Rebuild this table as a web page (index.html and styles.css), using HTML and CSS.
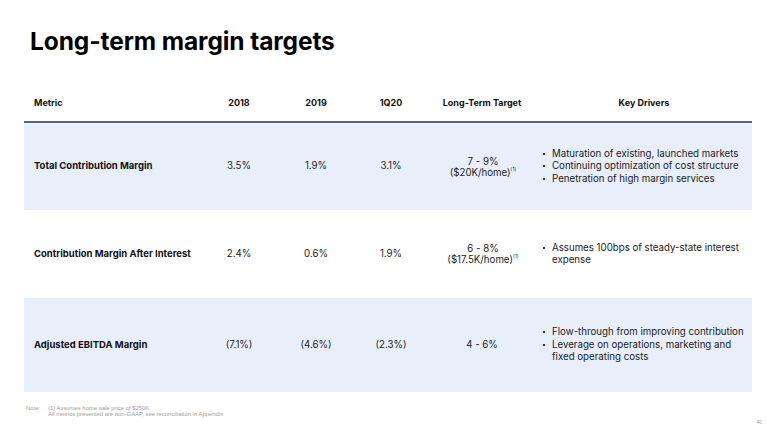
FILE: index.html
```
<!DOCTYPE html>
<html>
<head>
<meta charset="utf-8">
<link rel="stylesheet" href="styles.css">
</head>
<body>
<div class="slide">
  <h1 class="title">Long-term margin targets</h1>
  <div class="table">
    <div class="row head">
      <div class="cell metric">Metric</div>
      <div class="cell num">2018</div>
      <div class="cell num">2019</div>
      <div class="cell num">1Q20</div>
      <div class="cell num">Long-Term Target</div>
      <div class="cell num">Key Drivers</div>
    </div>
    <div class="row shade r1">
      <div class="cell metric">Total Contribution Margin</div>
      <div class="cell num">3.5%</div>
      <div class="cell num">1.9%</div>
      <div class="cell num">3.1%</div>
      <div class="cell num target">7 - 9%<br>($20K/home)<sup>(1)</sup></div>
      <div class="cell drivers">
        <ul>
          <li>Maturation of existing, launched markets</li>
          <li>Continuing optimization of cost structure</li>
          <li>Penetration of high margin services</li>
        </ul>
      </div>
    </div>
    <div class="row r2">
      <div class="cell metric">Contribution Margin After Interest</div>
      <div class="cell num">2.4%</div>
      <div class="cell num">0.6%</div>
      <div class="cell num">1.9%</div>
      <div class="cell num target">6 - 8%<br>($17.5K/home)<sup>(1)</sup></div>
      <div class="cell drivers">
        <ul>
          <li>Assumes 100bps of steady-state interest expense</li>
        </ul>
      </div>
    </div>
    <div class="row shade r3">
      <div class="cell metric">Adjusted EBITDA Margin</div>
      <div class="cell num">(7.1%)</div>
      <div class="cell num">(4.6%)</div>
      <div class="cell num">(2.3%)</div>
      <div class="cell num">4 - 6%</div>
      <div class="cell drivers">
        <ul>
          <li>Flow-through from improving contribution</li>
          <li>Leverage on operations, marketing and fixed operating costs</li>
        </ul>
      </div>
    </div>
  </div>
  <div class="footer">
    <div class="note">
      <span class="note-label">Note:</span>
      <div class="note-lines">
        <div>(1) Assumes home sale price of $250K</div>
        <div>All metrics presented are non-GAAP, see reconciliation in Appendix</div>
      </div>
    </div>
    <div class="page">40</div>
  </div>
</div>
</body>
</html>
```
FILE: styles.css
```
* { box-sizing: border-box; }
html, body { margin: 0; padding: 0; background: #ffffff; }
body {
  font-family: Inter, "Noto Sans", "Liberation Sans", sans-serif;
  color: #111111;
}
.slide {
  width: 767px;
  height: 427px;
  position: relative;
  overflow: hidden;
}
.title {
  margin: 0;
  padding: 26px 0 0 30px;
  font-size: 24.5px;
  line-height: 30px;
  font-weight: 700;
  letter-spacing: -0.1px;
  color: #000;
}
.table {
  margin: 32px 0 0 24px;
  width: 728px;
}
.row {
  display: grid;
  grid-template-columns: 176px 78px 76px 74px 108px 216px;
  align-items: center;
}
.row.head {
  height: 35px;
  border-bottom: 2px solid #5b6478;
  font-weight: 700;
}
.row.head .cell { padding-bottom: 3px; font-size: 9px; }
.shade { background: #e8eefa; }
.r1 { height: 87px; }
.r2 { height: 88px; }
.r3 { height: 94px; }
.cell {
  font-size: 9.7px;
  line-height: 12.5px;
}
.metric { padding-left: 10px; font-weight: 700; font-size: 9.5px; }
.num { text-align: center; color: #222; }
.row.head .num { color: #111; }
.target { line-height: 11px; position: relative; left: 1px; }
sup {
  font-size: 5px;
  line-height: 0;
  vertical-align: 0;
  position: relative;
  top: -5px;
}
.drivers ul {
  margin: 0;
  padding: 0 0 0 16px;
  list-style: none;
  color: #222;
}
.drivers li {
  position: relative;
}
.drivers li::before {
  content: "";
  position: absolute;
  left: -9px;
  top: 5px;
  width: 2px;
  height: 2px;
  background: #333;
}
.footer {
  position: relative;
  margin-top: 13px;
  height: 25px;
}
.note {
  display: flex;
  padding-left: 26px;
  font-family: "Liberation Sans", Arial, sans-serif;
  font-size: 5.9px;
  line-height: 6px;
  color: #a0a0a0;
}
.note-label { width: 22px; }
.page {
  position: absolute;
  right: 5px;
  top: 14px;
  font-family: "Liberation Sans", Arial, sans-serif;
  font-size: 5px;
  color: #a0a0a0;
}
```
